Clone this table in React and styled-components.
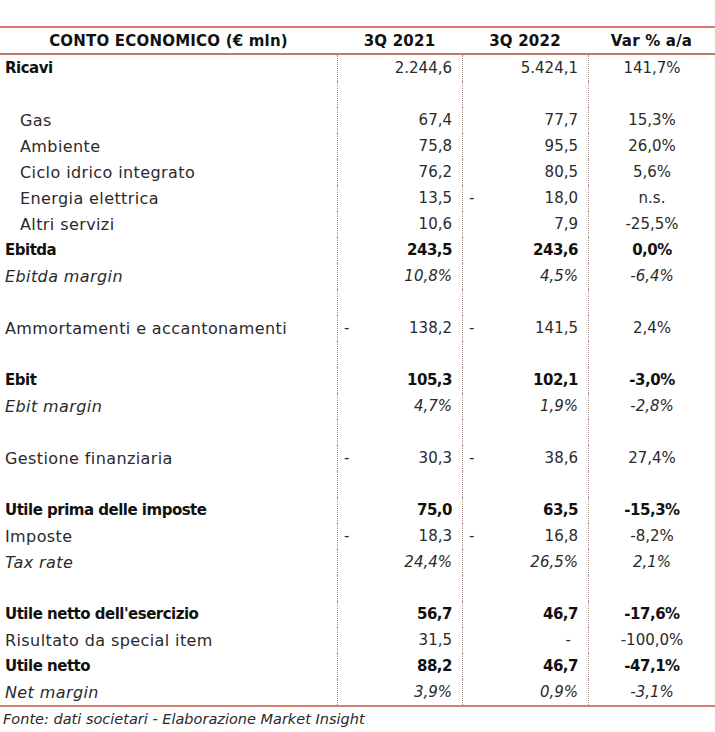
import React from 'react';
import styled, { createGlobalStyle } from 'styled-components';

const GlobalStyle = createGlobalStyle`
  html, body {
    margin: 0;
    padding: 0;
    background: #ffffff;
  }
  body {
    font-family: "DejaVu Sans", "Liberation Sans", sans-serif;
    color: #222222;
  }
`;

const Page = styled.div`
  width: 715px;
  padding-top: 26px;
`;

const Table = styled.div`
  display: grid;
  grid-template-columns: 337px 125px 126px 127px;
  border-top: 2px solid #e07672;
  border-bottom: 2px solid #d3806e;
`;

const HeadCell = styled.div`
  height: 25px;
  display: flex;
  align-items: center;
  justify-content: center;
  font-size: 15px;
  font-weight: bold;
  color: #111111;
  border-bottom: 2px solid #bb7a66;
  letter-spacing: 0.2px;
`;

const Label = styled.div`
  height: 26px;
  display: flex;
  align-items: center;
  padding-left: ${p => (p.$indent ? '20px' : '5px')};
  font-size: ${p => (p.$bold ? '15px' : '16px')};
  letter-spacing: ${p => (p.$bold ? '-0.5px' : '0.4px')};
  font-weight: ${p => (p.$bold ? 'bold' : 'normal')};
  font-style: ${p => (p.$italic ? 'italic' : 'normal')};
  color: ${p => (p.$bold ? '#111111' : '#2a2a2a')};
  white-space: nowrap;
`;

const Num = styled.div`
  height: 26px;
  display: flex;
  align-items: center;
  justify-content: space-between;
  padding: 0 10px 0 6px;
  font-size: 15px;
  letter-spacing: ${p => (p.$bold ? '-0.5px' : '0')};
  font-weight: ${p => (p.$bold ? 'bold' : 'normal')};
  font-style: ${p => (p.$italic ? 'italic' : 'normal')};
  color: ${p => (p.$bold ? '#111111' : '#2a2a2a')};
  border-left: 1px dotted #a08c88;
`;

const Dash = styled.span`
  visibility: ${p => (p.$show ? 'visible' : 'hidden')};
`;

const Zero = styled.span`
  padding-right: 7px;
`;

const Pct = styled(Num)`
  justify-content: center;
  padding: 0;
`;

const Note = styled.div`
  padding: 4px 0 0 3px;
  font-size: 14.5px;
  font-style: italic;
  color: #2a2a2a;
`;

const rows = [
  { label: 'Ricavi', boldLabel: true, a: '2.244,6', b: '5.424,1', c: '141,7%' },
  null,
  { label: 'Gas', indent: true, a: '67,4', b: '77,7', c: '15,3%' },
  { label: 'Ambiente', indent: true, a: '75,8', b: '95,5', c: '26,0%' },
  { label: 'Ciclo idrico integrato', indent: true, a: '76,2', b: '80,5', c: '5,6%' },
  { label: 'Energia elettrica', indent: true, a: '13,5', b: '18,0', bNeg: true, c: 'n.s.' },
  { label: 'Altri servizi', indent: true, a: '10,6', b: '7,9', c: '-25,5%' },
  { label: 'Ebitda', bold: true, a: '243,5', b: '243,6', c: '0,0%' },
  { label: 'Ebitda margin', italic: true, a: '10,8%', b: '4,5%', c: '-6,4%' },
  null,
  { label: 'Ammortamenti e accantonamenti', a: '138,2', aNeg: true, b: '141,5', bNeg: true, c: '2,4%' },
  null,
  { label: 'Ebit', bold: true, a: '105,3', b: '102,1', c: '-3,0%' },
  { label: 'Ebit margin', italic: true, a: '4,7%', b: '1,9%', c: '-2,8%' },
  null,
  { label: 'Gestione finanziaria', a: '30,3', aNeg: true, b: '38,6', bNeg: true, c: '27,4%' },
  null,
  { label: 'Utile prima delle imposte', bold: true, a: '75,0', b: '63,5', c: '-15,3%' },
  { label: 'Imposte', a: '18,3', aNeg: true, b: '16,8', bNeg: true, c: '-8,2%' },
  { label: 'Tax rate', italic: true, a: '24,4%', b: '26,5%', c: '2,1%' },
  null,
  { label: "Utile netto dell'esercizio", bold: true, a: '56,7', b: '46,7', c: '-17,6%' },
  { label: 'Risultato da special item', a: '31,5', b: '-', bZero: true, c: '-100,0%' },
  { label: 'Utile netto', bold: true, a: '88,2', b: '46,7', c: '-47,1%' },
  { label: 'Net margin', italic: true, a: '3,9%', b: '0,9%', c: '-3,1%' },
];

const Value = ({ value, neg, zero, bold, italic }) => (
  <Num $bold={bold} $italic={italic}>
    <Dash $show={neg}>-</Dash>
    {zero ? <Zero>{value}</Zero> : <span>{value}</span>}
  </Num>
);

const App = () => {
  return (
    <Page>
      <GlobalStyle />
      <Table>
        <HeadCell>CONTO ECONOMICO (€ mln)</HeadCell>
        <HeadCell>3Q 2021</HeadCell>
        <HeadCell>3Q 2022</HeadCell>
        <HeadCell>Var % a/a</HeadCell>
        {rows.map((r, i) =>
          r ? (
            <React.Fragment key={i}>
              <Label $indent={r.indent} $bold={r.bold || r.boldLabel} $italic={r.italic}>
                {r.label}
              </Label>
              <Value value={r.a} neg={r.aNeg} bold={r.bold} italic={r.italic} />
              <Value value={r.b} neg={r.bNeg} zero={r.bZero} bold={r.bold} italic={r.italic} />
              <Pct $bold={r.bold} $italic={r.italic}>{r.c}</Pct>
            </React.Fragment>
          ) : (
            <React.Fragment key={i}>
              <Label />
              <Num />
              <Num />
              <Pct />
            </React.Fragment>
          )
        )}
      </Table>
      <Note>Fonte: dati societari - Elaborazione Market Insight</Note>
    </Page>
  );
};

export default App;
